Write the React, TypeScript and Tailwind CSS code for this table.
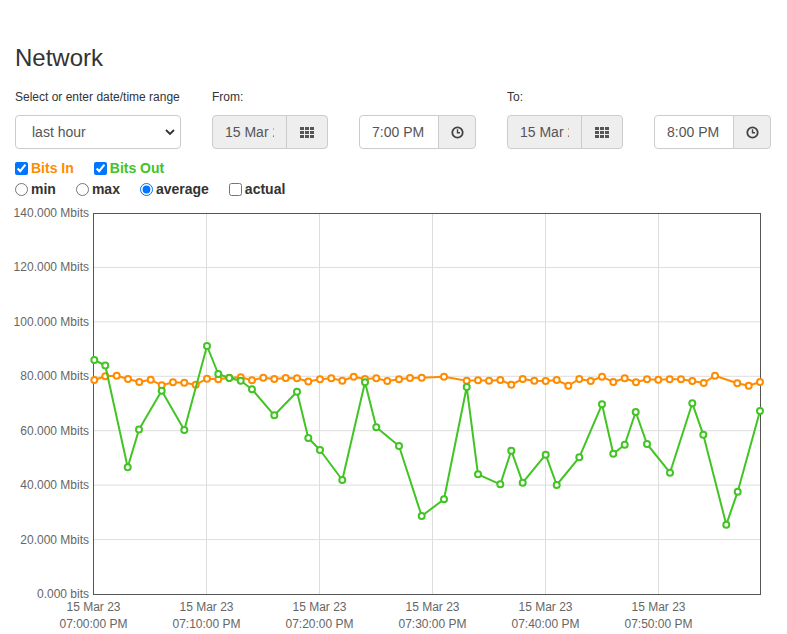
import { useState } from "react";

const orange = "#ff8c00";
const green = "#42c424";

// page coordinates of the plotted points (x: time, y: value)
const bitsIn: [number, number][] = [
  [94.3, 380], [105.3, 376.3], [116.7, 375.7], [128, 379], [139.3, 382], [150.7, 379.7], [161.7, 385.3],
  [173, 382.3], [184.3, 382.7], [195.7, 384.7], [207, 378.7], [218.3, 379.3], [229.3, 377.7], [240.7, 377.3],
  [252, 380.3], [263.3, 377.7], [274.3, 379], [285.7, 378], [297, 378.3], [308.3, 381.5], [320, 379.3],
  [331.3, 378.3], [342.3, 380.7], [353.7, 376.7], [365, 379], [376.3, 378.3], [387.3, 381], [399, 379.3],
  [410, 378], [421.7, 377.7], [444, 376.7], [466.7, 380.7], [478, 380.3], [489, 380.7], [500.3, 380],
  [511.3, 384.7], [522.7, 379], [534.3, 380.7], [545.7, 381], [556.7, 380], [568.3, 385.7], [579.3, 379],
  [590.7, 381], [602, 376.7], [613.3, 382], [624.7, 378.3], [636, 382.3], [647, 379.3], [658.3, 379.7],
  [669.7, 379.3], [681, 379.3], [692.3, 381], [703.7, 383], [715, 375.7], [737.3, 383.3], [748.7, 385.7],
  [760, 382]
];

const bitsOut: [number, number][] = [
  [94.3, 360], [105.3, 365.5], [127.7, 467.3], [139, 429.5], [161.7, 390.7], [184.3, 430], [207, 346],
  [218.3, 374], [229.3, 378], [240.7, 380.7], [252, 389.3], [274.3, 415.3], [297, 391.7], [308.3, 438],
  [320, 450], [342.3, 480], [365, 382.3], [376.3, 427.3], [399, 446], [421.7, 516], [444, 499.3],
  [466.7, 387], [478, 474.3], [500.3, 484.3], [511.3, 450.7], [522.7, 482.7], [545.7, 454.7], [556.7, 485],
  [579.3, 457.3], [602, 404.3], [613.3, 453.7], [624.7, 444.7], [635.7, 412], [647, 444], [670, 472.7],
  [692.3, 403.3], [703.3, 434.7], [726.3, 524.7], [737.7, 491.7], [760, 411]
];

const yTicks = [140, 120, 100, 80, 60, 40, 20, 0];
const xTicks = ["07:00:00 PM", "07:10:00 PM", "07:20:00 PM", "07:30:00 PM", "07:40:00 PM", "07:50:00 PM"];

const yPos = (v: number) => 594 - (v * 381) / 140;

function GridIcon() {
  return (
    <svg width="14" height="11" viewBox="0 0 14 11" fill="#555">
      {[0, 5, 10].map((x) => [0, 4, 8].map((y) => <rect key={`${x}-${y}`} x={x} y={y} width="4" height="3" />))}
    </svg>
  );
}

function ClockIcon() {
  return (
    <svg width="13" height="13" viewBox="0 0 13 13" fill="none" stroke="#444">
      <circle cx="6.5" cy="6.5" r="5.2" strokeWidth="1.8" />
      <path d="M6.5 3.2V6.8H9" strokeWidth="1.4" />
    </svg>
  );
}

function DateGroup() {
  return (
    <div className="flex h-[34px] w-[116px]">
      <input
        readOnly
        value="15 Mar 2023"
        className="h-full w-[75px] rounded-l-[4px] border border-[#ccc] bg-[#eee] px-3 text-[14px] text-[#555] outline-none"
      />
      <span className="-ml-px flex w-[42px] items-center justify-center rounded-r-[4px] border border-[#ccc] bg-[#eee]">
        <GridIcon />
      </span>
    </div>
  );
}

function TimeGroup({ value }: { value: string }) {
  return (
    <div className="flex h-[34px] w-[117px]">
      <input
        readOnly
        value={value}
        className="h-full w-[80px] rounded-l-[4px] border border-[#ccc] bg-white px-3 text-[14px] text-[#555] outline-none"
      />
      <span className="-ml-px flex w-[38px] items-center justify-center rounded-r-[4px] border border-[#ccc] bg-[#eee]">
        <ClockIcon />
      </span>
    </div>
  );
}

function Chart() {
  const line = (pts: [number, number][]) => pts.map((p) => p.join(",")).join(" ");
  return (
    <svg width="787" height="432" viewBox="0 200 787 432" className="block" style={{ fontFamily: "'Liberation Sans', Arial, sans-serif" }}>
      {yTicks.slice(1, -1).map((v) => (
        <line key={v} x1="93" x2="760" y1={yPos(v)} y2={yPos(v)} stroke="#ddd" strokeWidth="1" />
      ))}
      {[206.5, 319.5, 432.5, 545.5, 658.5].map((x) => (
        <line key={x} x1={x} x2={x} y1="213" y2="594" stroke="#ddd" strokeWidth="1" />
      ))}
      <rect x="93.5" y="213.5" width="667" height="381" fill="none" stroke="#555" strokeWidth="1" />
      {yTicks.map((v) => (
        <text key={v} x="89" y={yPos(v) + 4} textAnchor="end" fontSize="12" fill="#666">
          {v === 0 ? "0.000 bits" : `${v}.000 Mbits`}
        </text>
      ))}
      {xTicks.map((t, i) => (
        <g key={t} fontSize="12" fill="#666" textAnchor="middle">
          <text x={93.5 + i * 113} y="611">15 Mar 23</text>
          <text x={93.5 + i * 113} y="628">{t}</text>
        </g>
      ))}
      {[
        { pts: bitsIn, color: orange },
        { pts: bitsOut, color: green }
      ].map((s) => (
        <g key={s.color}>
          <polyline points={line(s.pts)} fill="none" stroke={s.color} strokeWidth="2" strokeLinejoin="round" />
          {s.pts.map(([x, y]) => (
            <circle key={x} cx={x} cy={y} r="3" fill="#fff" stroke={s.color} strokeWidth="2" />
          ))}
        </g>
      ))}
    </svg>
  );
}

export default function App() {
  const [mode, setMode] = useState("average");
  return (
    <div className="h-[634px] overflow-hidden bg-white text-[#333]" style={{ fontFamily: "'Liberation Sans', Arial, sans-serif" }}>
      <div className="px-[15px] pt-[45px]">
        <h1 className="text-[24px] leading-[26px] font-normal">Network</h1>

        <div className="mt-[18px] flex gap-[31px]">
          <div className="flex w-[166px] flex-col">
            <label className="h-[17px] text-[12px] leading-[17px]">Select or enter date/time range</label>
            <div className="relative mt-[9px] h-[34px]">
              <select className="h-full w-full appearance-none rounded-[4px] border border-[#ccc] bg-white pl-4 text-[14px] text-[#555] outline-none">
                <option>last hour</option>
              </select>
              <svg className="pointer-events-none absolute top-[14px] right-[6px]" width="10" height="7" viewBox="0 0 10 7" fill="none" stroke="#333" strokeWidth="1.8">
                <path d="M1 1l4 4 4-4" />
              </svg>
            </div>
          </div>
          <div className="flex flex-col">
            <label className="h-[17px] text-[12px] leading-[17px]">From:</label>
            <div className="mt-[9px] flex gap-[31px]">
              <DateGroup />
              <TimeGroup value="7:00 PM" />
            </div>
          </div>
          <div className="flex flex-col">
            <label className="h-[17px] text-[12px] leading-[17px]">To:</label>
            <div className="mt-[9px] flex gap-[31px]">
              <DateGroup />
              <TimeGroup value="8:00 PM" />
            </div>
          </div>
        </div>

        <div className="mt-[8px] flex h-[22px] items-center gap-[20px] text-[14px] font-bold">
          <label className="flex items-center" style={{ color: orange }}>
            <input type="checkbox" defaultChecked className="mr-[3px] h-[13px] w-[13px]" />
            Bits In
          </label>
          <label className="flex items-center" style={{ color: green }}>
            <input type="checkbox" defaultChecked className="mr-[3px] h-[13px] w-[13px]" />
            Bits Out
          </label>
        </div>
        <div className="flex h-[21px] items-center gap-[20px] text-[14px] font-bold">
          {["min", "max", "average"].map((m) => (
            <label key={m} className="flex items-center">
              <input
                type="radio"
                name="mode"
                checked={mode === m}
                onChange={() => setMode(m)}
                className="mr-[3px] h-[13px] w-[13px]"
              />
              {m}
            </label>
          ))}
          <label className="flex items-center">
            <input type="checkbox" className="mr-[3px] h-[13px] w-[13px]" />
            actual
          </label>
        </div>
      </div>
      <Chart />
    </div>
  );
}
